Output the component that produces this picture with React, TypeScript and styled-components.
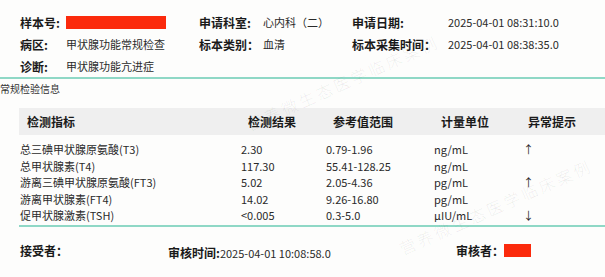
import React from 'react'
import styled, { createGlobalStyle } from 'styled-components'

const GlobalStyle = createGlobalStyle`
  html, body {
    margin: 0;
    padding: 0;
    background: #fdfdfc;
  }
  body {
    font-family: "Noto Sans CJK SC", "Noto Sans", sans-serif;
    color: #222;
  }
`

const info = [
  [
    { label: '样本号:', value: null },
    { label: '申请科室:', value: '心内科（二）' },
    { label: '申请日期:', value: '2025-04-01 08:31:10.0' },
  ],
  [
    { label: '病区:', value: '甲状腺功能常规检查' },
    { label: '标本类别：', value: '血清' },
    { label: '标本采集时间：', value: '2025-04-01 08:38:35.0' },
  ],
  [{ label: '诊断:', value: '甲状腺功能亢进症' }],
]

const rows = [
  ['总三碘甲状腺原氨酸(T3)', '2.30', '0.79-1.96', 'ng/mL', '↑'],
  ['总甲状腺素(T4)', '117.30', '55.41-128.25', 'ng/mL', ''],
  ['游离三碘甲状腺原氨酸(FT3)', '5.02', '2.05-4.36', 'pg/mL', '↑'],
  ['游离甲状腺素(FT4)', '14.02', '9.26-16.80', 'pg/mL', ''],
  ['促甲状腺激素(TSH)', '<0.005', '0.3-5.0', 'μIU/mL', '↓'],
]

const headers = ['检测指标', '检测结果', '参考值范围', '计量单位', '异常提示']

export default function App() {
  return (
    <>
      <GlobalStyle />
      <Page>
        <Info>
          {info.map((row, i) => (
            <InfoRow key={i}>
              {row.map((c) => (
                <React.Fragment key={c.label}>
                  <Label>{c.label}</Label>
                  {c.value ? <Value>{c.value}</Value> : <Redact $w={100} />}
                </React.Fragment>
              ))}
            </InfoRow>
          ))}
        </Info>
        <SectionTitle>常规检验信息</SectionTitle>
        <Table>
          <HeadRow>
            {headers.map((h) => (
              <HeadCell key={h}>{h}</HeadCell>
            ))}
          </HeadRow>
          <Body>
            {rows.map((r) => (
              <BodyRow key={r[0]}>
                {r.map((v, i) => (
                  <Cell key={i}>{v}</Cell>
                ))}
              </BodyRow>
            ))}
          </Body>
        </Table>
        <Footer>
          <Label>接受者：</Label>
          <span>
            <Label>审核时间:</Label>
            <FooterValue>2025-04-01 10:08:58.0</FooterValue>
          </span>
          <Signer>
            <Label>审核者：</Label>
            <Redact $w={27} />
          </Signer>
        </Footer>
        <Watermark style={{ left: 252, top: 112 }}>营养微生态医学临床案例</Watermark>
        <Watermark style={{ left: 405, top: 236 }}>营养微生态医学临床案例</Watermark>
      </Page>
    </>
  )
}

const Page = styled.div`
  position: relative;
  width: 605px;
  height: 277px;
  overflow: hidden;
`
const Info = styled.div`
  padding: 11px 0 0 20px;
  border-bottom: 2px solid #8fd8c6;
`
const InfoRow = styled.div`
  display: grid;
  grid-template-columns: 46px 133px 64px 89px 96px 1fr;
  align-items: center;
  height: 22px;
`
const Label = styled.span`
  font-size: 12px;
  font-weight: 700;
  color: #1a1a1a;
  white-space: nowrap;
`
const Value = styled.span`
  font-size: 11px;
  color: #2a2a2a;
  white-space: nowrap;
`
const Redact = styled.span<{ $w: number }>`
  display: inline-block;
  width: ${(p) => p.$w}px;
  height: 13px;
  background: #fb2a0c;
  vertical-align: middle;
`
const SectionTitle = styled.div`
  font-size: 10px;
  line-height: 12px;
  color: #333;
  margin-top: 4px;
`
const Table = styled.div`
  margin: 13px 0 0 19px;
  border-bottom: 2px solid #8fd8c6;
`
const HeadRow = styled.div`
  display: grid;
  grid-template-columns: 221px 85px 108px 89px 1fr;
  align-items: center;
  height: 27px;
  background: #efefef;
`
const HeadCell = styled.div`
  padding-left: 8px;
  font-size: 12px;
  font-weight: 700;
  color: #1a1a1a;
  &:last-child {
    padding-left: 6px;
  }
`
const Body = styled.div`
  padding: 6px 0 1px;
`
const BodyRow = styled.div`
  display: grid;
  grid-template-columns: 221px 85px 108px 89px 1fr;
  align-items: center;
  height: 16.5px;
`
const Cell = styled.div`
  padding-left: 1px;
  font-size: 11px;
  color: #2a2a2a;
  white-space: nowrap;
`
const Footer = styled.div`
  display: grid;
  grid-template-columns: 148px 288px 1fr;
  align-items: center;
  height: 24px;
  margin-top: 12px;
  padding-left: 20px;
`
const FooterValue = styled.span`
  font-size: 11px;
  color: #2a2a2a;
`
const Signer = styled.span`
  display: flex;
  align-items: center;
`
const Watermark = styled.div`
  position: absolute;
  font-family: "Noto Sans CJK SC", sans-serif;
  font-size: 16px;
  font-weight: 300;
  line-height: 24px;
  letter-spacing: 3px;
  color: rgba(0, 0, 0, 0.075);
  transform: rotate(-24deg);
  transform-origin: left bottom;
  white-space: nowrap;
  pointer-events: none;
`
